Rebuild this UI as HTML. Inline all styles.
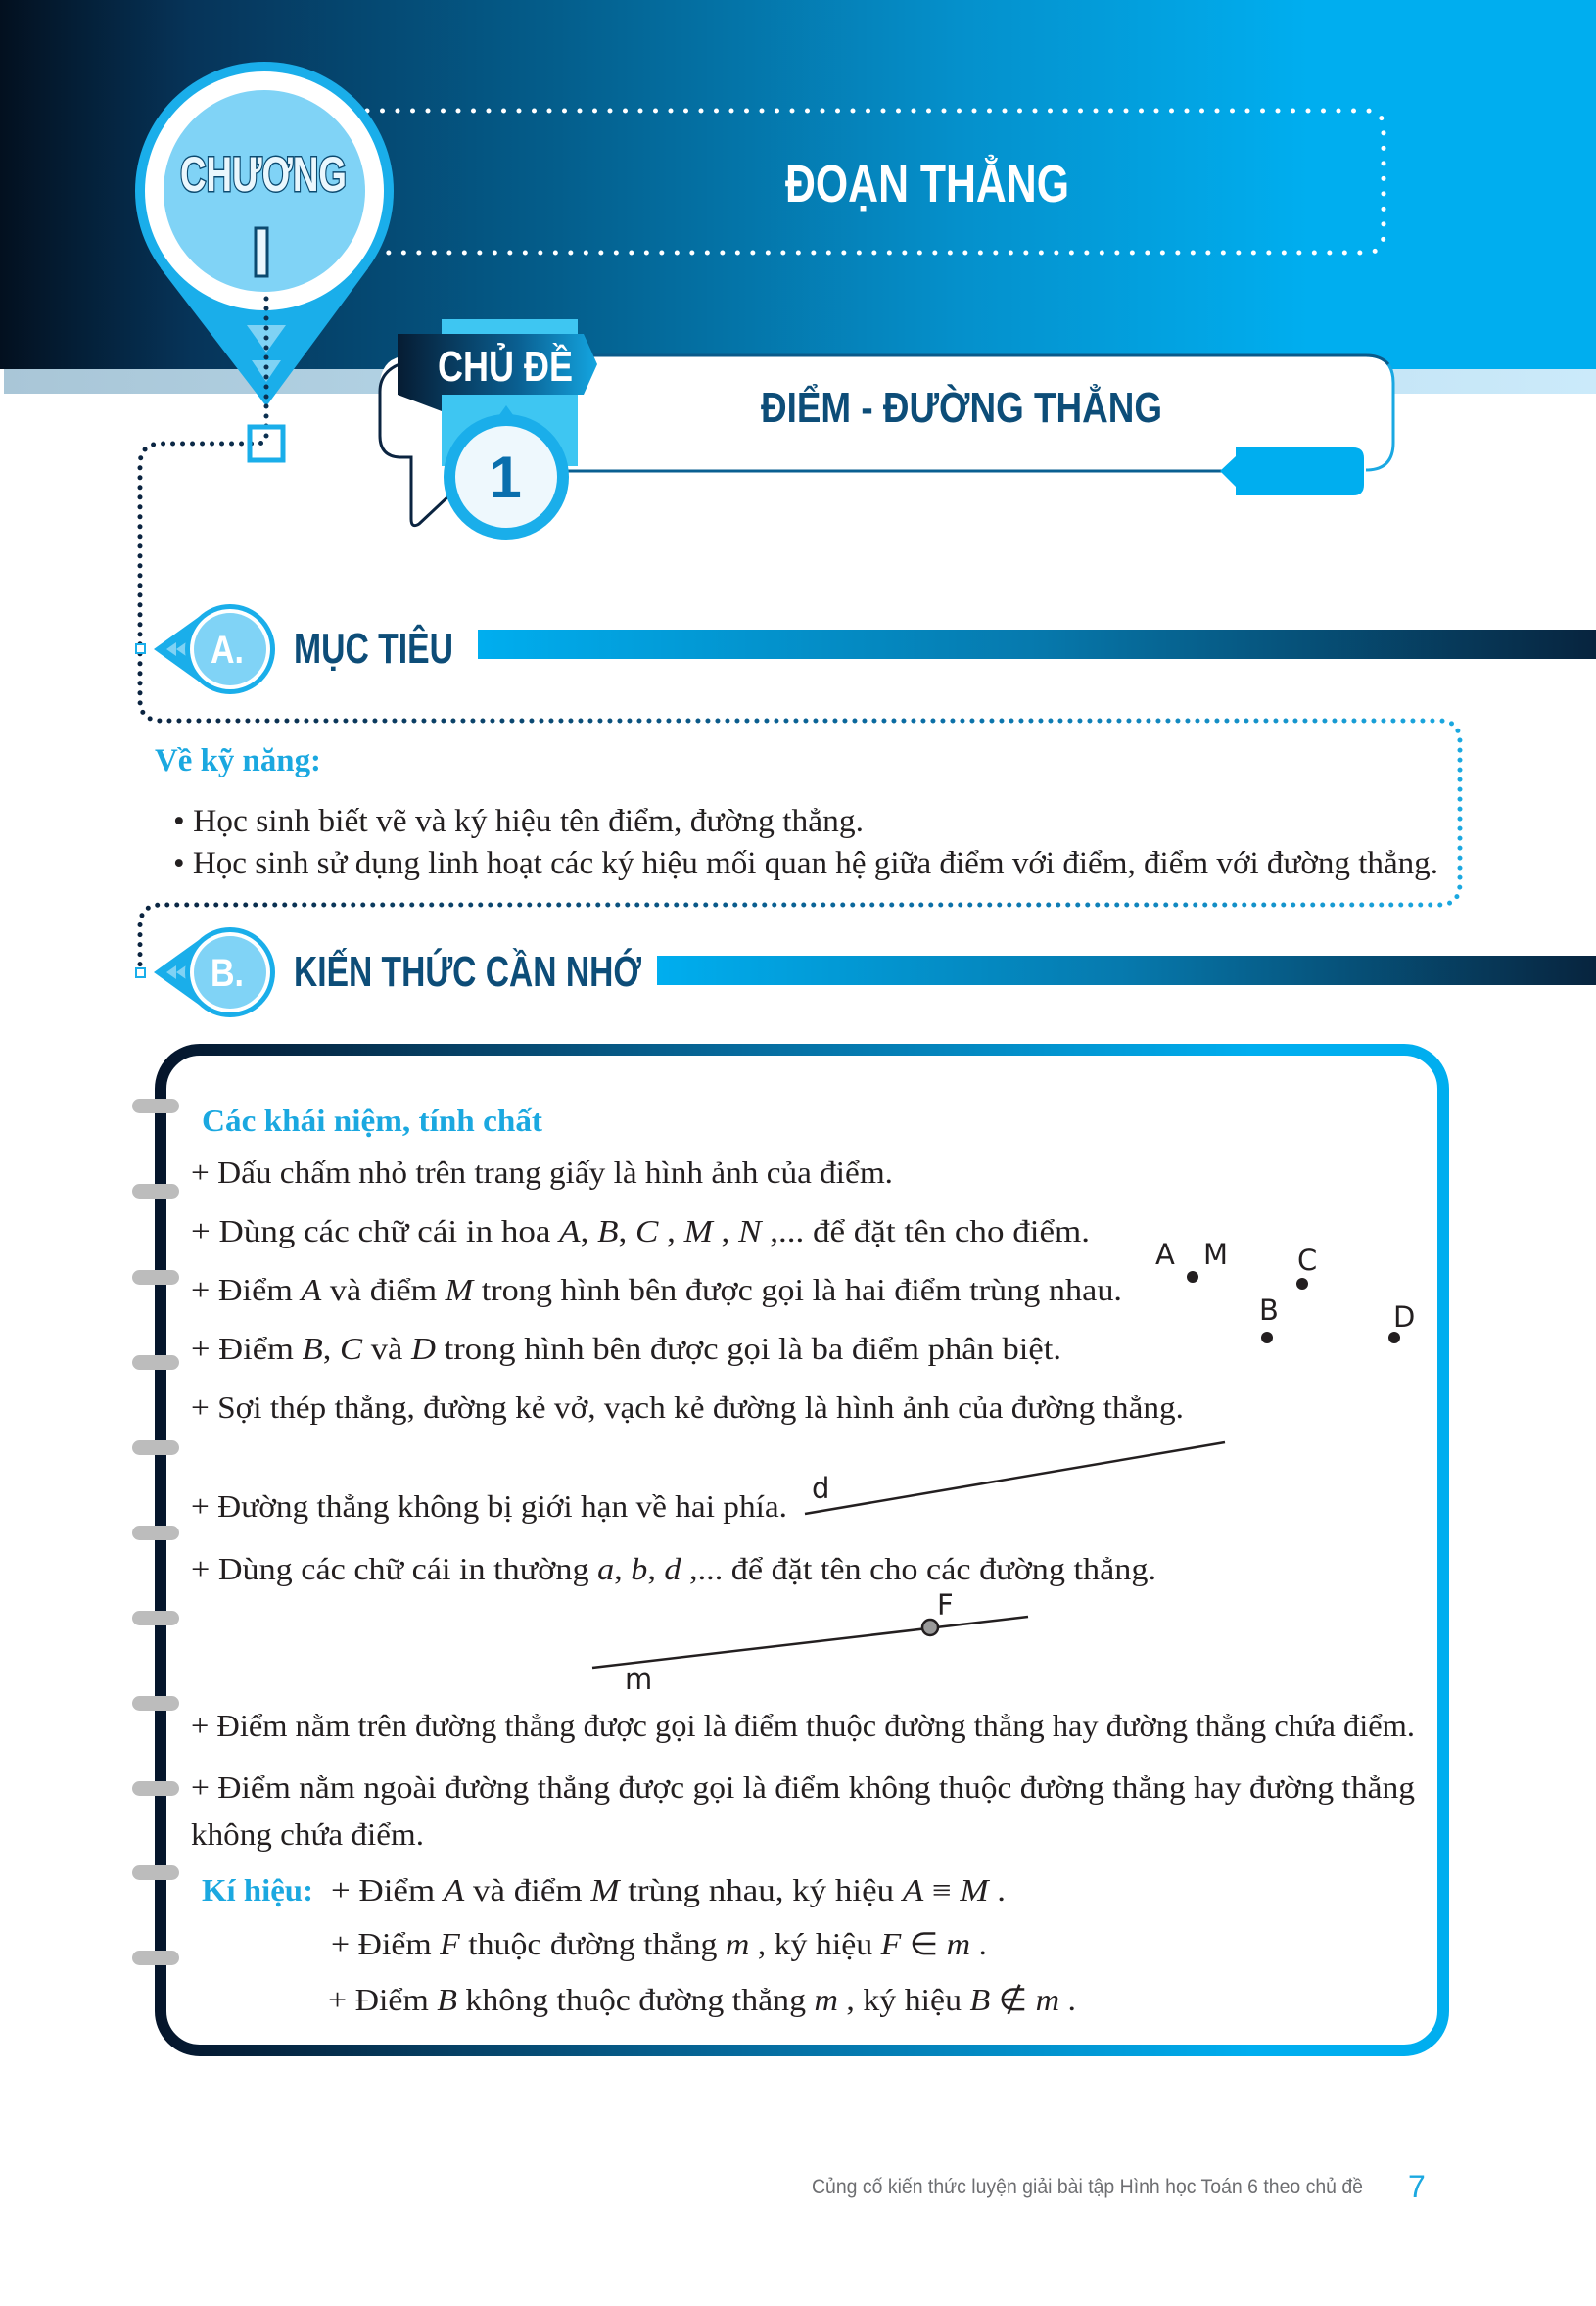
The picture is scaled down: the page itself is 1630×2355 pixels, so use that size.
<!DOCTYPE html>
<html><head><meta charset="utf-8"><style>
html,body{margin:0;padding:0;background:#fff}
svg{display:block}
.h{font-family:"Liberation Sans",sans-serif;font-weight:bold}
.s{font-family:"Liberation Serif",serif;fill:#231f20}
.i{font-style:italic}
</style></head><body>
<svg width="1630" height="2355" viewBox="0 0 1630 2355" xmlns="http://www.w3.org/2000/svg">
<defs>
<linearGradient id="hdr" x1="0" x2="1" y1="0" y2="0">
<stop offset="0" stop-color="#03101f"/><stop offset="0.12" stop-color="#063459"/><stop offset="0.35" stop-color="#045e8c"/><stop offset="0.6" stop-color="#0590cb"/><stop offset="0.82" stop-color="#00aeef"/><stop offset="1" stop-color="#00aeef"/>
</linearGradient>
<linearGradient id="strip" x1="0" x2="1"><stop offset="0" stop-color="#a9c6d7"/><stop offset="0.5" stop-color="#b8dbee"/><stop offset="1" stop-color="#cbeafa"/></linearGradient>
<linearGradient id="bar" x1="0" x2="1"><stop offset="0" stop-color="#00aeef"/><stop offset="0.5" stop-color="#0679ad"/><stop offset="1" stop-color="#07243e"/></linearGradient>
<linearGradient id="box" x1="0" x2="1"><stop offset="0" stop-color="#05152b"/><stop offset="0.45" stop-color="#066a9c"/><stop offset="0.85" stop-color="#00aeef"/><stop offset="1" stop-color="#00aeef"/></linearGradient>
<linearGradient id="tab" x1="0" x2="1"><stop offset="0" stop-color="#061c33"/><stop offset="0.6" stop-color="#0a5f91"/><stop offset="1" stop-color="#14a5e0"/></linearGradient>
<linearGradient id="dot" x1="0" x2="1"><stop offset="0" stop-color="#0b2440"/><stop offset="0.6" stop-color="#0b6fa6"/><stop offset="1" stop-color="#1ba8e0"/></linearGradient>
</defs>

<rect x="0" y="0" width="1630" height="377" fill="url(#hdr)"/>
<rect x="4" y="377" width="1626" height="25" fill="url(#strip)"/>
<path d="M375 113 H1395 Q1413 113 1413 131 V240 Q1413 258 1395 258 H375" fill="none" stroke="#fff" stroke-width="5" stroke-linecap="round" stroke-dasharray="0 15.5"/>
<text x="947" y="206" class="h" font-size="54" fill="#fff" text-anchor="middle" textLength="290" lengthAdjust="spacingAndGlyphs">ĐOẠN THẲNG</text>

<!-- pin -->
<path d="M164 274 L272 415 L376 274 Z" fill="#1aaeea"/>
<circle cx="270" cy="195" r="132" fill="#1aaeea"/>
<circle cx="270" cy="195" r="122" fill="#fff"/>
<circle cx="270" cy="195" r="103" fill="#80d3f6"/>
<text x="269" y="195" class="h" font-size="50" fill="#eaf7fd" stroke="#0b4a70" stroke-width="3" paint-order="stroke" text-anchor="middle" textLength="170" lengthAdjust="spacingAndGlyphs">CHƯƠNG</text>
<rect x="261" y="233" width="12" height="49" fill="#eaf7fd" stroke="#0b4a70" stroke-width="3"/>
<path d="M252 332 L292 332 L272 360 Z" fill="#7fd2f4"/>
<path d="M257 368 L287 368 L272 390 Z" fill="#7fd2f4"/>

<!-- chu de box -->
<path d="M420 363 H1395 Q1423 363 1423 391 V452 Q1423 480 1395 480 H420 Q388 480 388 450 V395 Q388 363 420 363 Z" fill="#fff"/>
<path d="M450 363 H1395 Q1423 363 1423 391 V452 Q1423 480 1395 480" fill="none" stroke="#1aa8e2" stroke-width="3"/>
<path d="M450 363 H1395 Q1410 363 1418 372" fill="none" stroke="#0a5a8a" stroke-width="3"/>
<path d="M408 372 Q388 380 388 400 V445 Q388 466 408 467 H420 V530 Q420 540 428 535 L460 505" fill="#fff" stroke="#0b2440" stroke-width="3"/>
<path d="M580 481 H1262" stroke="#0a5f91" stroke-width="3"/>
<path d="M1262 457 H1382 Q1393 457 1393 468 V495 Q1393 506 1382 506 H1262 L1262 497 L1246 481 L1262 466 Z" fill="#00aeef"/>
<rect x="451" y="326" width="139" height="150" fill="#3ec6f2"/>
<path d="M406 341 H596 L610 372 L596 403 H451 V420 L406 403 Z" fill="url(#tab)"/>
<text x="516" y="389" class="h" font-size="44" fill="#fff" text-anchor="middle" textLength="138" lengthAdjust="spacingAndGlyphs">CHỦ ĐỀ</text>
<path d="M507 428 L517 414 L527 428 Z" fill="#1aaeea"/>
<circle cx="517" cy="487" r="64" fill="#1aaeea"/>
<circle cx="517" cy="487" r="52" fill="#eef8fd"/>
<text x="516" y="508" class="h" font-size="60" fill="#0a6fad" text-anchor="middle">1</text>
<text x="982" y="431" class="h" font-size="44" fill="#0d4d78" text-anchor="middle" textLength="410" lengthAdjust="spacingAndGlyphs">ĐIỂM - ĐƯỜNG THẲNG</text>

<path d="M272 305 V445 Q272 453 262 453 H165 Q143 453 143 475 V715 Q143 736 165 736 H1470 Q1491 736 1491 758 V902 Q1491 924 1470 924 H165 Q143 924 143 946 V995" fill="none" stroke="url(#dot)" stroke-width="5" stroke-linecap="round" stroke-dasharray="0 10"/>
<rect x="255" y="436" width="34" height="34" fill="none" stroke="#1aaeea" stroke-width="5"/>

<rect x="139" y="658" width="9" height="9" fill="#fff" stroke="#1aaeea" stroke-width="2"/>
<rect x="488" y="643" width="1142" height="30" fill="url(#bar)"/>
<path d="M157 663 L210 625 L210 701 Z" fill="#1aaeea"/>
<path d="M170 663 L180 656 V670Z M180 663 L190 656 V670Z M190 663 L200 656 V670Z" fill="#7fd2f4"/>
<circle cx="235" cy="663" r="46" fill="#1aaeea"/>
<circle cx="235" cy="663" r="41" fill="#fff"/>
<circle cx="235" cy="663" r="37" fill="#80d3f6"/>
<text x="232" y="677" class="h" font-size="40" fill="#fff" text-anchor="middle" textLength="34" lengthAdjust="spacingAndGlyphs">A.</text>
<text x="300" y="677" class="h" font-size="44" fill="#0d4d78" textLength="163" lengthAdjust="spacingAndGlyphs">MỤC TIÊU</text>

<text x="158" y="787" class="s" font-size="33" font-weight="bold" style="fill:#1ba8e0" textLength="170" lengthAdjust="spacingAndGlyphs">Về kỹ năng:</text>
<text x="177" y="849" class="s" font-size="33" textLength="705" lengthAdjust="spacingAndGlyphs">• Học sinh biết vẽ và ký hiệu tên điểm, đường thẳng.</text>
<text x="177" y="892" class="s" font-size="33" textLength="1292" lengthAdjust="spacingAndGlyphs">• Học sinh sử dụng linh hoạt các ký hiệu mối quan hệ giữa điểm với điểm, điểm với đường thẳng.</text>

<rect x="139" y="989" width="9" height="9" fill="#fff" stroke="#1aaeea" stroke-width="2"/>
<rect x="671" y="976" width="959" height="30" fill="url(#bar)"/>
<path d="M157 993 L210 955 L210 1031 Z" fill="#1aaeea"/>
<path d="M170 993 L180 986 V1000Z M180 993 L190 986 V1000Z M190 993 L200 986 V1000Z" fill="#7fd2f4"/>
<circle cx="235" cy="993" r="46" fill="#1aaeea"/>
<circle cx="235" cy="993" r="41" fill="#fff"/>
<circle cx="235" cy="993" r="37" fill="#80d3f6"/>
<text x="232" y="1007" class="h" font-size="40" fill="#fff" text-anchor="middle" textLength="34" lengthAdjust="spacingAndGlyphs">B.</text>
<text x="300" y="1007" class="h" font-size="44" fill="#0d4d78" textLength="355" lengthAdjust="spacingAndGlyphs">KIẾN THỨC CẦN NHỚ</text>

<rect x="164" y="1072" width="1310" height="1022" rx="40" fill="none" stroke="url(#box)" stroke-width="12"/>
<g fill="#bcbcbc">
<rect x="135" y="1122" width="48" height="15" rx="7.5"/><rect x="135" y="1209" width="48" height="15" rx="7.5"/><rect x="135" y="1297" width="48" height="15" rx="7.5"/><rect x="135" y="1384" width="48" height="15" rx="7.5"/><rect x="135" y="1471" width="48" height="15" rx="7.5"/><rect x="135" y="1558" width="48" height="15" rx="7.5"/><rect x="135" y="1645" width="48" height="15" rx="7.5"/><rect x="135" y="1732" width="48" height="15" rx="7.5"/><rect x="135" y="1819" width="48" height="15" rx="7.5"/><rect x="135" y="1905" width="48" height="15" rx="7.5"/><rect x="135" y="1992" width="48" height="15" rx="7.5"/>
</g>

<text x="206" y="1155" class="s" font-size="32" font-weight="bold" style="fill:#1ba8e0" textLength="348" lengthAdjust="spacingAndGlyphs">Các khái niệm, tính chất</text>
<text x="195" y="1208" class="s" font-size="32" textLength="717" lengthAdjust="spacingAndGlyphs">+ Dấu chấm nhỏ trên trang giấy là hình ảnh của điểm.</text>
<text x="195" y="1268" class="s" font-size="32" textLength="918" lengthAdjust="spacingAndGlyphs">+ Dùng các chữ cái in hoa  <tspan class="i">A</tspan>, <tspan class="i">B</tspan>, <tspan class="i">C</tspan> , <tspan class="i">M</tspan> , <tspan class="i">N</tspan> ,... để đặt tên cho điểm.</text>
<text x="195" y="1328" class="s" font-size="32" textLength="951" lengthAdjust="spacingAndGlyphs">+ Điểm  <tspan class="i">A</tspan>  và điểm  <tspan class="i">M</tspan>  trong hình bên được gọi là hai điểm trùng nhau.</text>
<text x="195" y="1388" class="s" font-size="32" textLength="889" lengthAdjust="spacingAndGlyphs">+ Điểm  <tspan class="i">B</tspan>, <tspan class="i">C</tspan>  và  <tspan class="i">D</tspan>  trong hình bên được gọi là ba điểm phân biệt.</text>
<text x="195" y="1448" class="s" font-size="32" textLength="1014" lengthAdjust="spacingAndGlyphs">+ Sợi thép thẳng, đường kẻ vở, vạch kẻ đường là hình ảnh của đường thẳng.</text>
<text x="195" y="1549" class="s" font-size="32" textLength="609" lengthAdjust="spacingAndGlyphs">+ Đường thẳng không bị giới hạn về hai phía.</text>
<text x="195" y="1613" class="s" font-size="32" textLength="986" lengthAdjust="spacingAndGlyphs">+ Dùng các chữ cái in thường  <tspan class="i">a</tspan>, <tspan class="i">b</tspan>, <tspan class="i">d</tspan> ,... để đặt tên cho các đường thẳng.</text>
<text x="195" y="1773" class="s" font-size="32" textLength="1250" lengthAdjust="spacingAndGlyphs">+ Điểm nằm trên đường thẳng được gọi là điểm thuộc đường thẳng hay đường thẳng chứa điểm.</text>
<text x="195" y="1836" class="s" font-size="32" textLength="1250" lengthAdjust="spacingAndGlyphs">+ Điểm nằm ngoài đường thẳng được gọi là điểm không thuộc đường thẳng hay đường thẳng</text>
<text x="195" y="1884" class="s" font-size="32" textLength="238" lengthAdjust="spacingAndGlyphs">không chứa điểm.</text>
<text x="206" y="1941" class="s" font-size="32" font-weight="bold" style="fill:#1ba8e0" textLength="114" lengthAdjust="spacingAndGlyphs">Kí hiệu:</text>
<text x="338" y="1941" class="s" font-size="32" textLength="689" lengthAdjust="spacingAndGlyphs">+ Điểm  <tspan class="i">A</tspan>  và điểm  <tspan class="i">M</tspan>  trùng nhau, ký hiệu  <tspan class="i">A</tspan> ≡ <tspan class="i">M</tspan> .</text>
<text x="338" y="1996" class="s" font-size="32" textLength="670" lengthAdjust="spacingAndGlyphs">+ Điểm  <tspan class="i">F</tspan>  thuộc đường thẳng  <tspan class="i">m</tspan> , ký hiệu  <tspan class="i">F</tspan> ∈ <tspan class="i">m</tspan> .</text>
<text x="335" y="2053" class="s" font-size="32" textLength="764" lengthAdjust="spacingAndGlyphs">+ Điểm  <tspan class="i">B</tspan>  không thuộc đường thẳng  <tspan class="i">m</tspan> , ký hiệu  <tspan class="i">B</tspan> ∉ <tspan class="i">m</tspan> .</text>

<g font-family="'DejaVu Sans',sans-serif" font-size="29" fill="#231f20">
<text x="1180" y="1291">A</text><text x="1229" y="1291">M</text>
<text x="1325" y="1297">C</text><text x="1286" y="1348">B</text><text x="1423" y="1355">D</text>
<text x="829" y="1530">d</text><text x="957" y="1649">F</text><text x="638" y="1725">m</text>
</g>
<circle cx="1218" cy="1304" r="6" fill="#231f20"/>
<circle cx="1330" cy="1311" r="6" fill="#231f20"/>
<circle cx="1294" cy="1366" r="6" fill="#231f20"/>
<circle cx="1424" cy="1366" r="6" fill="#231f20"/>
<line x1="822" y1="1546" x2="1251" y2="1473" stroke="#231f20" stroke-width="2.5"/>
<line x1="605" y1="1703" x2="1050" y2="1651" stroke="#231f20" stroke-width="2.5"/>
<circle cx="950" cy="1662" r="8" fill="#9a9a9a" stroke="#231f20" stroke-width="2.5"/>

<text x="1392" y="2240" font-family="'Liberation Sans',sans-serif" font-size="21" fill="#6d6e71" text-anchor="end" textLength="563" lengthAdjust="spacingAndGlyphs">Củng cố kiến thức luyện giải bài tập Hình học Toán 6 theo chủ đề</text>
<text x="1438" y="2244" font-family="'Liberation Sans',sans-serif" font-size="32" fill="#1ba8e0">7</text>
</svg>
</body></html>
